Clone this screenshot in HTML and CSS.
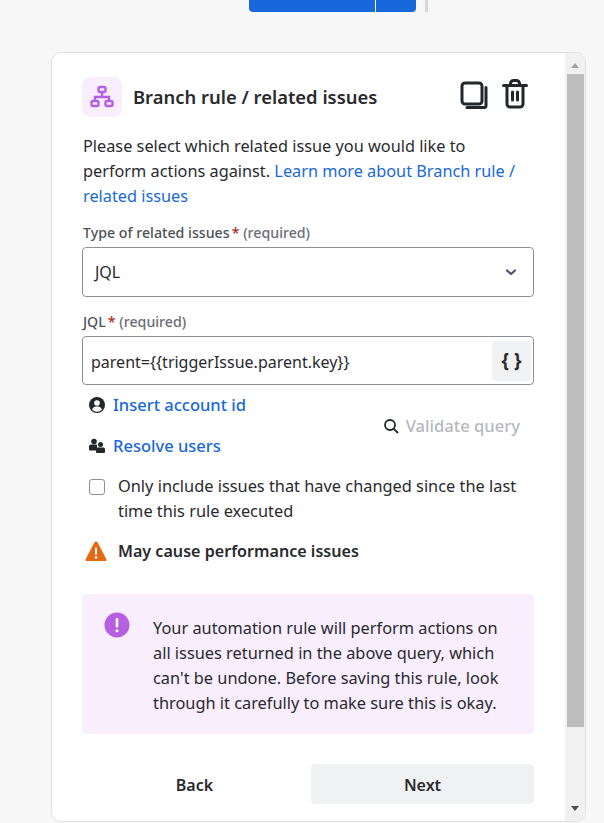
FILE: index.html
```html
<!DOCTYPE html>
<html lang="en">
<head>
<meta charset="utf-8">
<title>Branch rule / related issues</title>
<link rel="stylesheet" href="styles.css">
</head>
<body>
<div class="topbar">
  <div class="split-btn"><span class="split-main"></span><span class="split-arrow"></span></div>
  <span class="top-divider"></span>
</div>
<section class="card">
  <div class="content">
    <header class="head">
      <span class="head-icon">
        <svg width="24" height="24" viewBox="0 0 24 24" fill="none" stroke="#b55fe3" stroke-width="2.400"><rect x="8.500" y="2" width="7" height="5" rx="1.500"/><rect x="1.500" y="16" width="7" height="5" rx="1.500"/><rect x="15.500" y="16" width="7" height="5" rx="1.500"/><path d="M12 7v5M5 16v-4h14v4"/></svg>
      </span>
      <h1 class="title">Branch rule / related issues</h1>
      <span class="head-actions">
        <svg width="28" height="28" viewBox="0 0 28 28" fill="none" stroke="#22272b" stroke-width="3" stroke-linecap="round"><rect x="2" y="2" width="20" height="21" rx="3"/><path d="M26 6.500v18a2 2 0 0 1-2 2H7"/></svg>
        <svg width="26" height="30" viewBox="0 2 26 30" fill="none" stroke="#22272b" stroke-width="3" stroke-linecap="round"><path d="M1.500 8.500h23M5 9v18a3 3 0 0 0 3 3h10a3 3 0 0 0 3-3V9M8.500 8V6.500a3 3 0 0 1 3-3h3a3 3 0 0 1 3 3V8"/><path d="M10.500 15v8M15.500 15v8"/></svg>
      </span>
    </header>
    <p class="intro">Please select which related issue you would like to perform actions against. <a class="link" href="#">Learn more about Branch rule / related issues</a></p>
    <label class="label label-first">Type of related issues<span class="req">*</span> <span class="muted">(required)</span></label>
    <div class="field select">
      <span>JQL</span>
      <svg width="14" height="14" viewBox="0 0 14 14" fill="none" stroke="#44546f" stroke-width="2.200" stroke-linecap="round" stroke-linejoin="round"><path d="M3 5.500l4 3.500 4-3.500"/></svg>
    </div>
    <label class="label label-second">JQL<span class="req">*</span> <span class="muted">(required)</span></label>
    <div class="field jql">
      <span class="jql-text">parent={{triggerIssue.parent.key}}</span>
      <span class="brace-btn">{ }</span>
    </div>
    <div class="tools">
      <div class="tool-links">
        <a class="tool-link" href="#">
          <svg width="16" height="16" viewBox="0 0 16 16"><circle cx="8" cy="8" r="8" fill="#22272b"/><circle cx="8" cy="6" r="2.800" fill="#fff"/><path d="M3 12.500c1-2.500 3-3 5-3s4 .5 5 3a6.500 6.500 0 0 1-10 0z" fill="#fff"/></svg>
          Insert account id
        </a>
        <a class="tool-link" href="#">
          <svg width="16" height="16" viewBox="0 0 16 16" fill="#22272b"><circle cx="5" cy="3.500" r="2.800"/><circle cx="11.500" cy="6.500" r="2.500"/><path d="M0 8.500a2 2 0 0 1 2-2h6v6H1a1 1 0 0 1-1-1z"/><path d="M7 11a1.500 1.500 0 0 1 1.500-1.500H14.500A1.500 1.500 0 0 1 16 11v3a1 1 0 0 1-1 1H8a1 1 0 0 1-1-1z"/></svg>
          Resolve users
        </a>
      </div>
      <button class="validate" type="button">
        <svg width="16" height="16" viewBox="0 0 16 16" fill="none" stroke="#22272b" stroke-width="1.800" stroke-linecap="round"><circle cx="7" cy="7" r="5"/><path d="M10.800 10.800L14.500 14.500"/></svg>
        Validate query
      </button>
    </div>
    <label class="check">
      <span class="box"></span>
      <span>Only include issues that have changed since the last time this rule executed</span>
    </label>
    <div class="warn">
      <svg width="22" height="21" viewBox="0 0 22 21"><path d="M9.300 1.500a2 2 0 0 1 3.400 0l8.800 17a1 1 0 0 1-.9 1.500H1.400a1 1 0 0 1-.9-1.500z" fill="#e56910"/><rect x="10" y="6.500" width="2" height="7.500" rx="1" fill="#fff"/><circle cx="11" cy="16.500" r="1.300" fill="#fff"/></svg>
      <strong>May cause performance issues</strong>
    </div>
    <aside class="notice">
      <svg class="notice-icon" width="26" height="26" viewBox="0 0 26 26"><circle cx="13" cy="13" r="12.500" fill="#b65fe0"/><rect x="11.700" y="6" width="2.600" height="9.500" rx="1.300" fill="#fff"/><circle cx="13" cy="18.800" r="1.500" fill="#fff"/></svg>
      <p>Your automation rule will perform actions on all issues returned in the above query, which can't be undone. Before saving this rule, look through it carefully to make sure this is okay.</p>
    </aside>
    <div class="actions">
      <button class="btn btn-back" type="button">Back</button>
      <button class="btn btn-next" type="button">Next</button>
    </div>
  </div>
  <div class="scrollbar">
    <span class="arrow arrow-up"></span>
    <span class="thumb"></span>
    <span class="arrow arrow-down"></span>
  </div>
</section>
</body>
</html>
```
FILE: styles.css
```css
* { box-sizing: border-box; }
html, body { margin: 0; height: 100%; overflow: hidden; }
body {
  background: #f7f7f7;
  font-family: "Noto Sans", "Open Sans", sans-serif;
  font-size: 16.35px;
  line-height: 25px;
  color: #172b4d;
}
.topbar { display: flex; height: 12px; padding-left: 249px; }
.split-btn { display: flex; gap: 1px; height: 12px; }
.split-main { width: 126px; background: #1868db; border-radius: 0 0 0 4px; }
.split-arrow { width: 40px; background: #1868db; border-radius: 0 0 4px 0; }
.top-divider { width: 3px; margin-left: 9px; background: #d8d8d8; }
.card {
  display: flex;
  width: 535px;
  height: 770px;
  margin: 40px 0 0 51px;
  background: #fff;
  border: 1px solid #dfe1e6;
  border-radius: 10px;
  overflow: hidden;
}
.content { width: 513px; padding: 23px 31px 0 30px; flex: none; }
.head { display: flex; align-items: center; height: 42px; }
.head-icon {
  display: flex; align-items: center; justify-content: center;
  width: 40px; height: 40px; border-radius: 8px; background: #f8eefe; flex: none;
}
.title { margin: 0 0 2px 11px; font-size: 18.400px; font-weight: 600; color: #292a2e; line-height: 25px; flex: 1; }
.head-actions { display: flex; align-items: flex-end; gap: 14px; margin: 0 6px 6px 0; }
.intro { margin: 16px 0 0; padding: 0 8px 0 1px; font-size: 16.300px; color: #292a2e; }
.link { color: #1868db; text-decoration: none; }
.label { display: block; padding-left: 1px; font-size: 14.200px; line-height: 20px; font-weight: 500; color: #505258; }
.label-first { margin-top: 14px; }
.label-second { margin-top: 15px; }
.req { color: #ae2e24; margin-left: 2px; }
.muted { color: #6b6e76; font-weight: 500; }
.field {
  display: flex; align-items: center; justify-content: space-between;
  width: 452px; background: #fff; border: 1px solid #8c8f97; border-radius: 4px; color: #292a2e;
  font-size: 16px;
}
.select { height: 50px; margin-top: 4px; padding: 0 15px 0 12px; }
.jql { height: 49px; margin-top: 4px; padding: 0 2px 0 8px; }
.jql-text { padding-top: 3px; }
.brace-btn {
  display: flex; align-items: center; justify-content: center;
  width: 39px; height: 40px; border-radius: 4px; background: #f0f1f2;
  font-weight: 700; color: #292a2e; font-size: 19px;
}
.tools { display: flex; justify-content: space-between; padding: 7px 14px 0 7px; }
.tool-links { display: flex; flex-direction: column; gap: 16px; font-size: 16.500px; }
.tool-link { display: flex; align-items: center; gap: 8px; color: #1868db; font-weight: 500; text-decoration: none; }
.validate {
  display: flex; align-items: center; gap: 7px; align-self: center;
  margin-top: 1px; padding: 0; border: 0; background: none;
  font: 500 16.600px/25px "Noto Sans", sans-serif; color: #b5b8bd;
}
.check { display: flex; gap: 13px; margin-top: 16px; padding-left: 7px; color: #292a2e; }
.box { width: 16px; height: 16px; margin-top: 5px; flex: none; border: 1px solid #8c8f97; border-radius: 3px; background: #fff; }
.warn { display: flex; align-items: center; gap: 11px; margin-top: 15px; padding-left: 3px; color: #292a2e; }
.warn strong { font-weight: 600; font-size: 16.100px; }
.notice { display: flex; gap: 23px; min-height: 140px; margin-top: 30px; padding: 22px 30px 0 22px; background: #f8eefe; border-radius: 4px; }
.notice p { margin: 0; color: #292a2e; }
.notice-icon { flex: none; margin-top: -4px; }
.actions { display: flex; justify-content: space-between; margin-top: 30px; }
.btn {
  width: 223px; height: 40px; padding: 2px 0 0; border: 0; border-radius: 4px; background: none;
  font: 600 16px/25px "Noto Sans", sans-serif; color: #292a2e;
}
.btn-back { padding-left: 2px; }
.btn-next { background: #f0f1f2; }
.scrollbar { position: relative; flex: 1; display: flex; flex-direction: column; align-items: center; background: #f1f1f1; }
.thumb { width: 17px; height: 653px; margin-top: 6px; background: #bdbdbd; }
.arrow { width: 0; height: 0; border-left: 4px solid transparent; border-right: 4px solid transparent; }
.arrow-up { margin-top: 10px; border-bottom: 5px solid #a3a3a3; }
.arrow-down { margin-top: auto; margin-bottom: 10px; border-top: 5px solid #505050; }
```
